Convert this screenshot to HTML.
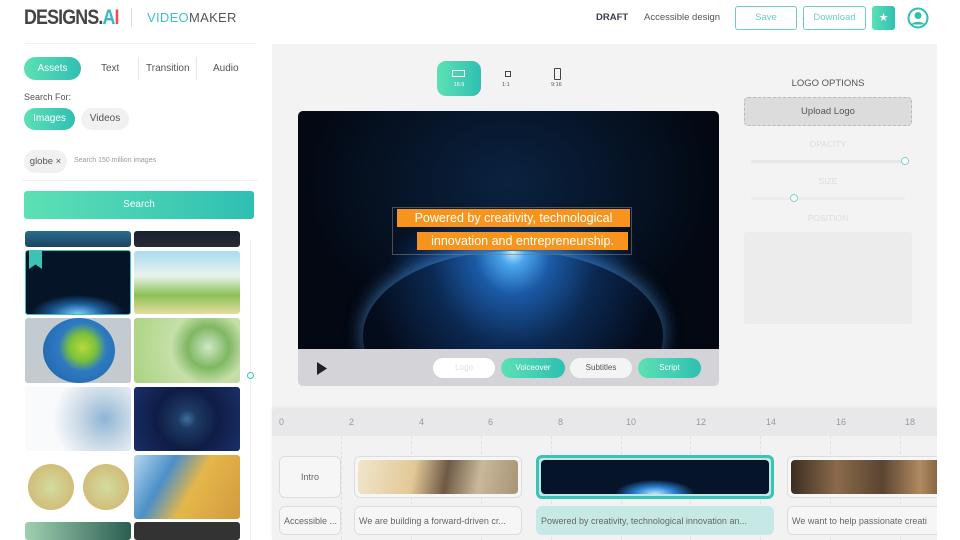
<!DOCTYPE html><html><head><meta charset="utf-8"><style>
*{box-sizing:border-box;margin:0;padding:0}
body{width:960px;height:540px;overflow:hidden;background:#fff;font-family:"Liberation Sans",sans-serif;position:relative;color:#555}
.a{position:absolute}
.g{background:linear-gradient(90deg,#5de0b4,#2fbfb3);color:#fff}
.pill{position:absolute;border-radius:14px;font-size:10px;text-align:center}
.t{position:absolute;border-radius:3px;overflow:hidden}
.tl{position:absolute;border:1px solid #ddd;border-radius:6px;background:#f6f6f6;font-size:9px;color:#666}
.vl{position:absolute;top:436px;width:1px;height:104px;border-left:1px dashed #e0e0e0}
</style></head><body>
<!-- header -->
<div class="a" style="left:24px;top:6px;font-size:21px;font-weight:bold;color:#444;letter-spacing:-1px;transform:scaleX(.85);transform-origin:left">DESIGNS.<span style="color:#3ab6c9">A</span><span style="color:#e8505b">I</span></div>
<div class="a" style="left:131px;top:8px;width:1px;height:19px;background:#ddd"></div>
<div class="a" style="left:147px;top:10px;font-size:13px;letter-spacing:.3px"><span style="color:#3fc0c0">VIDEO</span><span style="color:#555">MAKER</span></div>
<div class="a" style="left:596px;top:12px;font-size:9.5px;font-weight:bold;color:#3c3c50">DRAFT</div>
<div class="a" style="left:644px;top:12px;font-size:9.5px;color:#555">Accessible design</div>
<div class="a" style="left:735px;top:6px;width:62px;height:24px;border:1.5px solid #6ccfc5;border-radius:3px;font-size:9.5px;color:#6ccfc5;text-align:center;line-height:21px">Save</div>
<div class="a" style="left:803px;top:6px;width:63px;height:24px;border:1.5px solid #6ccfc5;border-radius:3px;font-size:9.5px;color:#6ccfc5;text-align:center;line-height:21px">Download</div>
<div class="a g" style="left:872px;top:6px;width:23px;height:24px;border-radius:3px;text-align:center;line-height:24px;font-size:11px">★</div>
<svg class="a" style="left:907px;top:7px" width="22" height="22" viewBox="0 0 22 22"><circle cx="11" cy="11" r="9.5" fill="none" stroke="#2fbfb3" stroke-width="2"/><circle cx="11" cy="8.5" r="3.5" fill="#2fbfb3"/><path d="M4.5 17.5c2-3.5 11-3.5 13 0" fill="#2fbfb3"/></svg>
<!-- left panel -->
<div class="a" style="left:25px;top:43px;width:232px;height:1px;background:#f0f0f0"></div>
<div class="pill g" style="left:24px;top:57px;width:57px;height:23px;line-height:23px">Assets</div>
<div class="a" style="left:101px;top:63px;font-size:10px">Text</div>
<div class="a" style="left:138px;top:57px;width:1px;height:23px;background:#e6e6e6"></div>
<div class="a" style="left:146px;top:63px;font-size:10px">Transition</div>
<div class="a" style="left:196px;top:57px;width:1px;height:23px;background:#e6e6e6"></div>
<div class="a" style="left:213px;top:63px;font-size:10px">Audio</div>
<div class="a" style="left:24px;top:92px;font-size:9px">Search For:</div>
<div class="pill g" style="left:24px;top:108px;width:51px;height:22px;line-height:22px">Images</div>
<div class="pill" style="left:81px;top:108px;width:48px;height:22px;line-height:22px;background:#f1f1f1;color:#555">Videos</div>
<div class="pill" style="left:24px;top:150px;width:43px;height:23px;line-height:23px;background:#f1f1f1;color:#555;font-size:9.5px">globe ×</div>
<div class="a" style="left:74px;top:157px;font-size:7px;color:#999">Search 150 million images</div>
<div class="a" style="left:22px;top:180px;width:236px;height:1px;background:#f0f0f0"></div>
<div class="a g" style="left:24px;top:191px;width:230px;height:28px;border-radius:3px;text-align:center;line-height:28px;font-size:10px">Search</div>
<div class="t" style="left:25px;top:231px;width:106px;height:16px;background:linear-gradient(180deg,#2a6d8e,#1b4561)"></div>
<div class="t" style="left:134px;top:231px;width:106px;height:16px;background:linear-gradient(180deg,#172132,#2a2b30)"></div>
<div class="t" style="left:25px;top:250px;width:106px;height:65px;border:1.5px solid #3cc3b6;background:radial-gradient(ellipse 60% 40% at 50% 100%,#7fd0ff,#1b5d9a 40%,#061428 75%)"></div>
<div class="a" style="left:29px;top:251px;width:13px;height:18px;background:#3cc3b6;clip-path:polygon(0 0,100% 0,100% 100%,50% 75%,0 100%)"></div>
<div class="t" style="left:134px;top:251px;width:106px;height:63px;background:linear-gradient(180deg,#a9dcf0,#e8f3ec 40%,#8cc155 70%,#e6dca0)"></div>
<div class="t" style="left:25px;top:318px;width:106px;height:65px;background:#c3cbd0"></div>
<div class="a" style="left:43px;top:318px;width:72px;height:65px;border-radius:50%;background:radial-gradient(circle at 55% 45%,#b7d83c 0,#7cc23a 25%,#2e7ac1 45%,#1e5fa5)"></div>
<div class="t" style="left:134px;top:318px;width:106px;height:65px;background:radial-gradient(circle at 70% 45%,#cfe8c4 0,#7fb763 25%,#c6e0a9 45%,#a9d37f)"></div>
<div class="t" style="left:25px;top:387px;width:106px;height:64px;background:radial-gradient(circle at 75% 50%,#8fb4d6 0,#c9d9e6 30%,#f8fafc 60%)"></div>
<div class="t" style="left:134px;top:387px;width:106px;height:64px;background:radial-gradient(circle at 50% 50%,#3f6f9a 0,#1d3b64 15%,#0f1c45 50%,#1a2f6b)"></div>
<div class="a" style="left:28px;top:464px;width:46px;height:46px;border-radius:50%;background:radial-gradient(#d3dc9e,#d1b06a)"></div>
<div class="a" style="left:83px;top:464px;width:46px;height:46px;border-radius:50%;background:radial-gradient(#d3dc9e,#d1b06a)"></div>
<div class="t" style="left:134px;top:455px;width:106px;height:64px;background:linear-gradient(120deg,#b6d7ef,#4c8fc8 30%,#e5b74a 55%,#d19a3e)"></div>
<div class="t" style="left:25px;top:522px;width:106px;height:18px;background:linear-gradient(90deg,#9fd1b0,#2c5d52)"></div>
<div class="t" style="left:134px;top:522px;width:106px;height:18px;background:#333"></div>
<div class="a" style="left:250px;top:240px;width:1px;height:300px;background:#eee"></div>
<div class="a" style="left:247px;top:372px;width:7px;height:7px;border:1.5px solid #3cc3b6;border-radius:50%;background:#fff"></div>
<!-- center -->
<div class="a" style="left:272px;top:44px;width:665px;height:367px;background:#f3f3f3"></div>
<div class="a g" style="left:437px;top:61px;width:44px;height:35px;border-radius:9px"></div>
<div class="a" style="left:452px;top:70px;width:13px;height:7px;border:1px solid #fff"></div>
<div class="a" style="left:437px;top:82px;width:44px;text-align:center;font-size:5.5px;color:#fff">16:9</div>
<div class="a" style="left:505px;top:71px;width:6px;height:6px;border:1px solid #444"></div>
<div class="a" style="left:502px;top:82px;font-size:5.5px;color:#555">1:1</div>
<div class="a" style="left:554px;top:68px;width:7px;height:12px;border:1px solid #444;border-radius:1px"></div>
<div class="a" style="left:551px;top:82px;font-size:5.5px;color:#555">9:16</div>
<div class="a" style="left:298px;top:111px;width:421px;height:275px;border-radius:5px;background:#d4d4d8;overflow:hidden">
<div style="position:absolute;left:0;top:0;width:421px;height:238px;background:radial-gradient(ellipse 40% 25% at 51% 62%,#2a6fb8 0,#0c2e63 40%,transparent 75%),radial-gradient(ellipse at 50% 30%,#0a2240,#030812 70%)"></div>
<div style="position:absolute;left:65px;top:140px;width:300px;height:170px;border-radius:50%;background:radial-gradient(ellipse at 50% 0%,#cdefff 0,#4aa6ee 6%,#1b5aa6 18%,#0b2850 40%,#040c1c 70%);box-shadow:0 -4px 18px rgba(80,170,255,.6)"></div>
<div style="position:absolute;left:0;top:238px;width:421px;height:37px;background:#d4d4d8"></div>
</div>
<div class="a" style="left:397px;top:209px;width:233px;height:18px;background:#f7941d;color:#fff;font-size:12.5px;text-align:center;line-height:18px">Powered by creativity, technological</div>
<div class="a" style="left:417px;top:232px;width:211px;height:18px;background:#f7941d;color:#fff;font-size:12.5px;text-align:center;line-height:18px">innovation and entrepreneurship.</div>
<div class="a" style="left:392px;top:207px;width:240px;height:48px;border:1px solid rgba(120,120,120,.6)"></div>
<svg class="a" style="left:316px;top:362px" width="12" height="13"><path d="M1 0L11 6.5L1 13Z" fill="#222"/></svg>
<div class="pill" style="left:433px;top:358px;width:62px;height:20px;line-height:20px;background:#fff;color:#ddd;font-size:8px">Logo</div>
<div class="pill g" style="left:501px;top:358px;width:64px;height:20px;line-height:20px;font-size:8px">Voiceover</div>
<div class="pill" style="left:570px;top:358px;width:62px;height:20px;line-height:20px;background:#f4f4f4;color:#555;font-size:8px">Subtitles</div>
<div class="pill g" style="left:638px;top:358px;width:63px;height:20px;line-height:20px;font-size:8px">Script</div>
<!-- right options -->
<div class="a" style="left:744px;top:78px;width:168px;text-align:center;font-size:9.5px;color:#555">LOGO OPTIONS</div>
<div class="a" style="left:744px;top:97px;width:168px;height:29px;border:1px dashed #bbb;border-radius:4px;background:#dcdcdc;text-align:center;line-height:27px;font-size:9.5px;color:#555">Upload Logo</div>
<div class="a" style="left:744px;top:139px;width:168px;text-align:center;font-size:8.5px;color:#ddd">OPACITY</div>
<div class="a" style="left:751px;top:160px;width:154px;height:3px;background:#e6e6e6;border-radius:2px"></div>
<div class="a" style="left:901px;top:157px;width:8px;height:8px;border:1.5px solid #7fd6cc;border-radius:50%;background:#fff"></div>
<div class="a" style="left:744px;top:176px;width:168px;text-align:center;font-size:8.5px;color:#ddd">SIZE</div>
<div class="a" style="left:751px;top:197px;width:154px;height:3px;background:#ececec;border-radius:2px"></div>
<div class="a" style="left:790px;top:194px;width:8px;height:8px;border:1.5px solid #7fd6cc;border-radius:50%;background:#fff"></div>
<div class="a" style="left:744px;top:213px;width:168px;text-align:center;font-size:8.5px;color:#ddd">POSITION</div>
<div class="a" style="left:744px;top:232px;width:168px;height:92px;background:#ececec;border-radius:3px"></div>
<!-- timeline -->
<div class="a" style="left:272px;top:410px;width:665px;height:130px;background:#f2f2f2;box-shadow:0 -2px 3px rgba(0,0,0,.06)"></div>
<div class="a" style="left:272px;top:410px;width:665px;height:26px;background:#e8e8ea"></div>
<div class="vl" style="left:341px"></div><div class="vl" style="left:411px"></div><div class="vl" style="left:481px"></div><div class="vl" style="left:551px"></div><div class="vl" style="left:621px"></div><div class="vl" style="left:690px"></div><div class="vl" style="left:760px"></div><div class="vl" style="left:830px"></div><div class="vl" style="left:900px"></div>
<div class="a" style="left:272px;top:417px;width:665px;font-size:9px;color:#999">
<span class="a" style="left:7px">0</span><span class="a" style="left:77px">2</span><span class="a" style="left:147px">4</span><span class="a" style="left:216px">6</span><span class="a" style="left:286px">8</span><span class="a" style="left:354px">10</span><span class="a" style="left:424px">12</span><span class="a" style="left:494px">14</span><span class="a" style="left:564px">16</span><span class="a" style="left:633px">18</span></div>
<div class="tl" style="left:279px;top:456px;width:62px;height:42px;text-align:center;line-height:40px">Intro</div>
<div class="tl" style="left:354px;top:456px;width:168px;height:42px;padding:3px"><div style="width:100%;height:100%;border-radius:4px;background:linear-gradient(100deg,#f0e6cc,#e2c896 35%,#6e5a45 55%,#c9b89a 75%,#a89476)"></div></div>
<div class="a" style="left:536px;top:455px;width:238px;height:44px;border:3px solid #3cc3b6;border-radius:6px;background:#bfe8e4;padding:2px"><div style="width:100%;height:100%;border-radius:4px;background:radial-gradient(ellipse 25% 60% at 50% 100%,#bfeaff,#2b7fd0 35%,transparent 70%),#06142a"></div></div>
<div class="tl" style="left:787px;top:456px;width:160px;height:42px;padding:3px"><div style="width:100%;height:100%;border-radius:4px;background:linear-gradient(90deg,#3c2e22,#8a6a4a 30%,#5a4532 60%,#b08a60 85%,#7a5a3a)"></div></div>
<div class="tl" style="left:279px;top:506px;width:62px;height:29px;line-height:28px;padding-left:4px;white-space:nowrap;overflow:hidden">Accessible ...</div>
<div class="tl" style="left:354px;top:506px;width:168px;height:29px;line-height:28px;padding-left:4px;white-space:nowrap;overflow:hidden">We are building a forward-driven cr...</div>
<div class="tl" style="left:536px;top:506px;width:238px;height:29px;line-height:28px;padding-left:4px;white-space:nowrap;overflow:hidden;background:#c6e9e6;border-color:#c6e9e6">Powered by creativity, technological innovation an...</div>
<div class="tl" style="left:787px;top:506px;width:160px;height:29px;line-height:28px;padding-left:4px;white-space:nowrap;overflow:hidden">We want to help passionate creati</div>
<div class="a" style="left:937px;top:44px;width:23px;height:496px;background:#fff"></div>
</body></html>
